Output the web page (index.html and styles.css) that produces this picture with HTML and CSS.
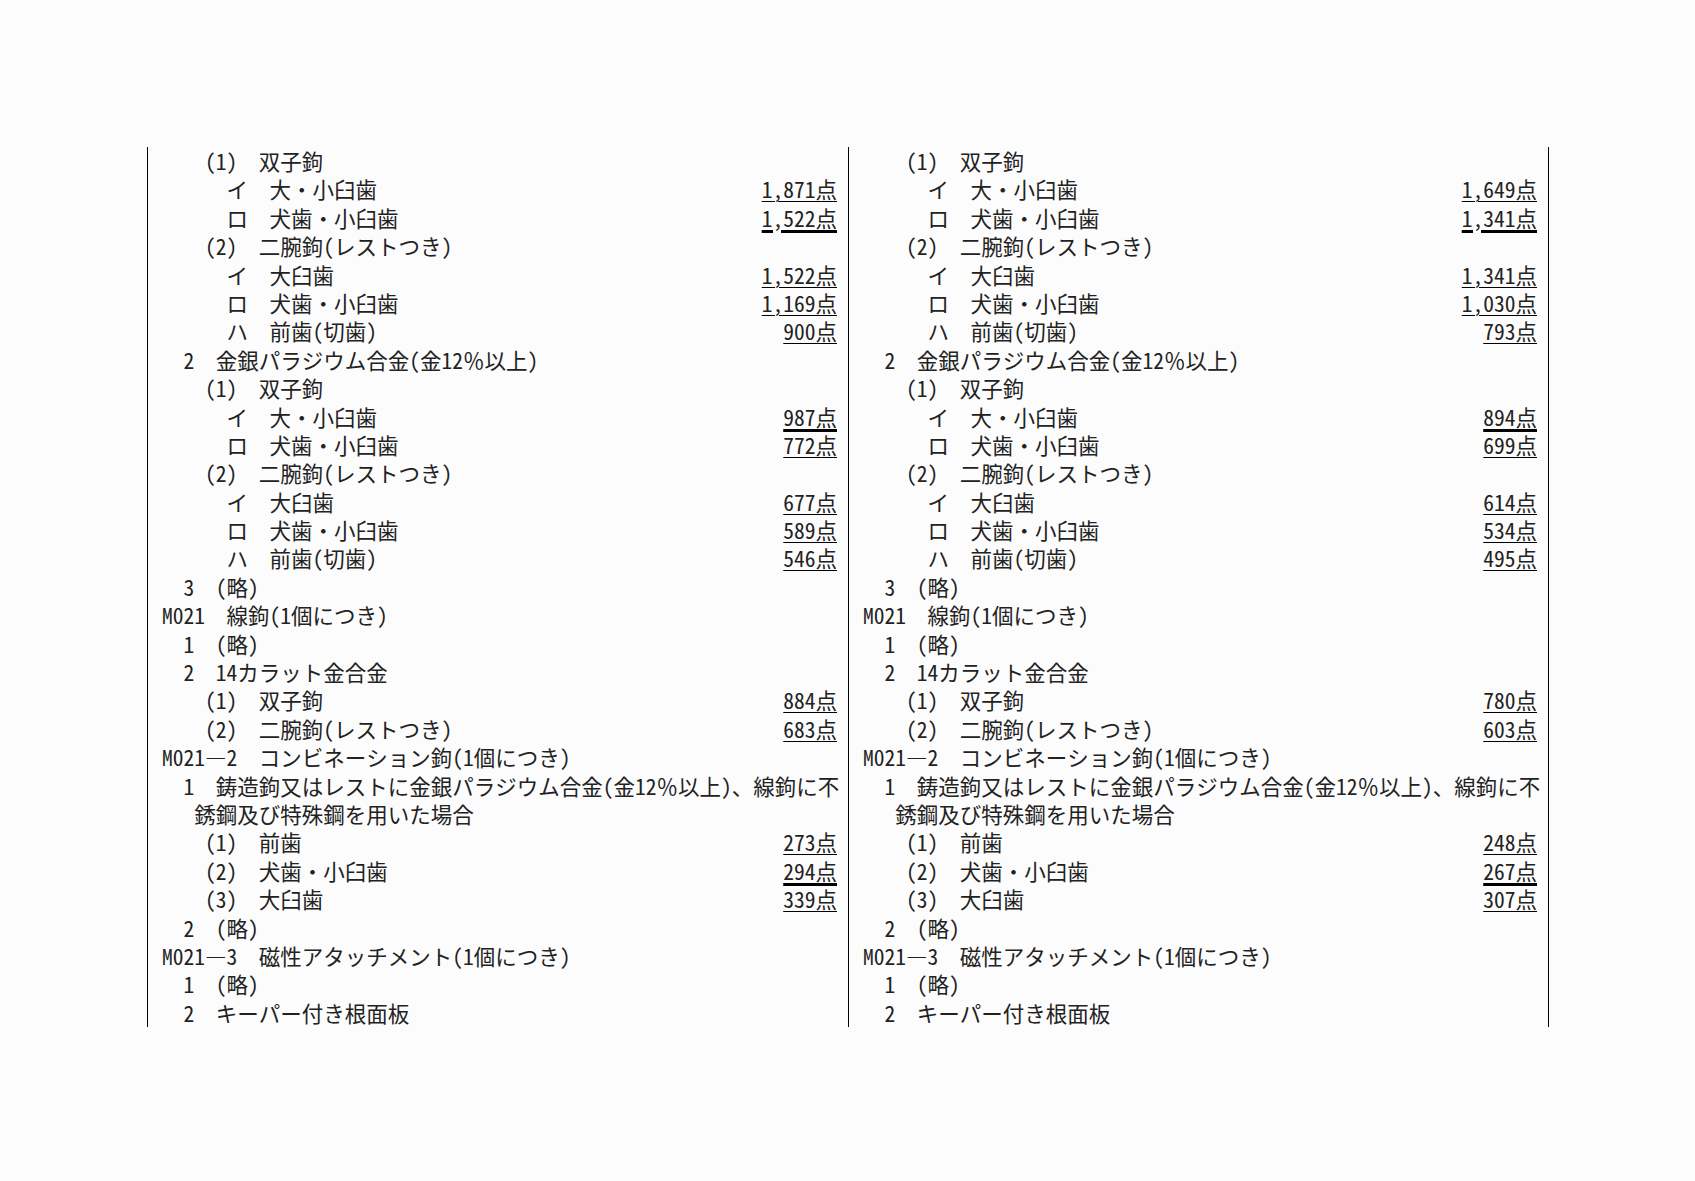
FILE: index.html
```html
<!DOCTYPE html>
<html lang="ja">
<head>
<meta charset="utf-8">
<title>M021</title>
<link rel="stylesheet" href="styles.css">
</head>
<body>
<div class="page">
  <div class="col col-left">
    <div class="row"><span class="lbl">　　(1)　双子鉤</span></div>
    <div class="row"><span class="lbl">　　　イ　大・小臼歯</span><span class="amt">1,871点</span></div>
    <div class="row"><span class="lbl">　　　ロ　犬歯・小臼歯</span><span class="amt thick">1,522点</span></div>
    <div class="row"><span class="lbl">　　(2)　二腕鉤(レストつき)</span></div>
    <div class="row"><span class="lbl">　　　イ　大臼歯</span><span class="amt">1,522点</span></div>
    <div class="row"><span class="lbl">　　　ロ　犬歯・小臼歯</span><span class="amt">1,169点</span></div>
    <div class="row"><span class="lbl">　　　ハ　前歯(切歯)</span><span class="amt">900点</span></div>
    <div class="row"><span class="lbl">　2　金銀パラジウム合金(金12％以上)</span></div>
    <div class="row"><span class="lbl">　　(1)　双子鉤</span></div>
    <div class="row"><span class="lbl">　　　イ　大・小臼歯</span><span class="amt thick">987点</span></div>
    <div class="row"><span class="lbl">　　　ロ　犬歯・小臼歯</span><span class="amt">772点</span></div>
    <div class="row"><span class="lbl">　　(2)　二腕鉤(レストつき)</span></div>
    <div class="row"><span class="lbl">　　　イ　大臼歯</span><span class="amt">677点</span></div>
    <div class="row"><span class="lbl">　　　ロ　犬歯・小臼歯</span><span class="amt">589点</span></div>
    <div class="row"><span class="lbl">　　　ハ　前歯(切歯)</span><span class="amt">546点</span></div>
    <div class="row"><span class="lbl">　3　(略)</span></div>
    <div class="row"><span class="lbl">M021　線鉤(1個につき)</span></div>
    <div class="row"><span class="lbl">　1　(略)</span></div>
    <div class="row"><span class="lbl">　2　14カラット金合金</span></div>
    <div class="row"><span class="lbl">　　(1)　双子鉤</span><span class="amt">884点</span></div>
    <div class="row"><span class="lbl">　　(2)　二腕鉤(レストつき)</span><span class="amt">683点</span></div>
    <div class="row"><span class="lbl">M021—2　コンビネーション鉤(1個につき)</span></div>
    <div class="row"><span class="lbl">　1　鋳造鉤又はレストに金銀パラジウム合金(金12％以上)、線鉤に不</span></div>
    <div class="row"><span class="lbl">　 銹鋼及び特殊鋼を用いた場合</span></div>
    <div class="row"><span class="lbl">　　(1)　前歯</span><span class="amt">273点</span></div>
    <div class="row"><span class="lbl">　　(2)　犬歯・小臼歯</span><span class="amt thick">294点</span></div>
    <div class="row"><span class="lbl">　　(3)　大臼歯</span><span class="amt">339点</span></div>
    <div class="row"><span class="lbl">　2　(略)</span></div>
    <div class="row"><span class="lbl">M021—3　磁性アタッチメント(1個につき)</span></div>
    <div class="row"><span class="lbl">　1　(略)</span></div>
    <div class="row"><span class="lbl">　2　キーパー付き根面板</span></div>
  </div>
  <div class="col col-right">
    <div class="row"><span class="lbl">　　(1)　双子鉤</span></div>
    <div class="row"><span class="lbl">　　　イ　大・小臼歯</span><span class="amt">1,649点</span></div>
    <div class="row"><span class="lbl">　　　ロ　犬歯・小臼歯</span><span class="amt thick">1,341点</span></div>
    <div class="row"><span class="lbl">　　(2)　二腕鉤(レストつき)</span></div>
    <div class="row"><span class="lbl">　　　イ　大臼歯</span><span class="amt">1,341点</span></div>
    <div class="row"><span class="lbl">　　　ロ　犬歯・小臼歯</span><span class="amt">1,030点</span></div>
    <div class="row"><span class="lbl">　　　ハ　前歯(切歯)</span><span class="amt">793点</span></div>
    <div class="row"><span class="lbl">　2　金銀パラジウム合金(金12％以上)</span></div>
    <div class="row"><span class="lbl">　　(1)　双子鉤</span></div>
    <div class="row"><span class="lbl">　　　イ　大・小臼歯</span><span class="amt thick">894点</span></div>
    <div class="row"><span class="lbl">　　　ロ　犬歯・小臼歯</span><span class="amt">699点</span></div>
    <div class="row"><span class="lbl">　　(2)　二腕鉤(レストつき)</span></div>
    <div class="row"><span class="lbl">　　　イ　大臼歯</span><span class="amt">614点</span></div>
    <div class="row"><span class="lbl">　　　ロ　犬歯・小臼歯</span><span class="amt">534点</span></div>
    <div class="row"><span class="lbl">　　　ハ　前歯(切歯)</span><span class="amt">495点</span></div>
    <div class="row"><span class="lbl">　3　(略)</span></div>
    <div class="row"><span class="lbl">M021　線鉤(1個につき)</span></div>
    <div class="row"><span class="lbl">　1　(略)</span></div>
    <div class="row"><span class="lbl">　2　14カラット金合金</span></div>
    <div class="row"><span class="lbl">　　(1)　双子鉤</span><span class="amt">780点</span></div>
    <div class="row"><span class="lbl">　　(2)　二腕鉤(レストつき)</span><span class="amt">603点</span></div>
    <div class="row"><span class="lbl">M021—2　コンビネーション鉤(1個につき)</span></div>
    <div class="row"><span class="lbl">　1　鋳造鉤又はレストに金銀パラジウム合金(金12％以上)、線鉤に不</span></div>
    <div class="row"><span class="lbl">　 銹鋼及び特殊鋼を用いた場合</span></div>
    <div class="row"><span class="lbl">　　(1)　前歯</span><span class="amt">248点</span></div>
    <div class="row"><span class="lbl">　　(2)　犬歯・小臼歯</span><span class="amt thick">267点</span></div>
    <div class="row"><span class="lbl">　　(3)　大臼歯</span><span class="amt">307点</span></div>
    <div class="row"><span class="lbl">　2　(略)</span></div>
    <div class="row"><span class="lbl">M021—3　磁性アタッチメント(1個につき)</span></div>
    <div class="row"><span class="lbl">　1　(略)</span></div>
    <div class="row"><span class="lbl">　2　キーパー付き根面板</span></div>
  </div>
</div>
</body>
</html>
```

FILE: styles.css
```css
html, body {
  margin: 0;
  padding: 0;
  background: #fcfcfc;
}

body {
  width: 1695px;
  height: 1181px;
  overflow: hidden;
  color: #222;
  font-family: "Noto Sans Mono CJK JP", "Noto Sans CJK JP", monospace;
  font-size: 21.5px;
}

.page {
  display: flex;
  padding: 147px 0 0 147px;
}

.col {
  border-left: 1px solid #000;
  padding: 0 11px 0 14px;
}

.col-left {
  width: 675px;
}

.col-right {
  width: 674px;
  border-right: 1px solid #000;
}

.row {
  display: flex;
  justify-content: space-between;
  height: 28.4px;
  line-height: 28.4px;
  white-space: pre;
}

.lbl {
  flex: 0 0 auto;
}

.amt {
  flex: 0 0 auto;
  text-decoration: underline;
  text-decoration-color: #000;
  text-decoration-thickness: 1px;
  text-underline-offset: 3px;
}

.amt.thick {
  text-decoration-thickness: 3px;
}
```
